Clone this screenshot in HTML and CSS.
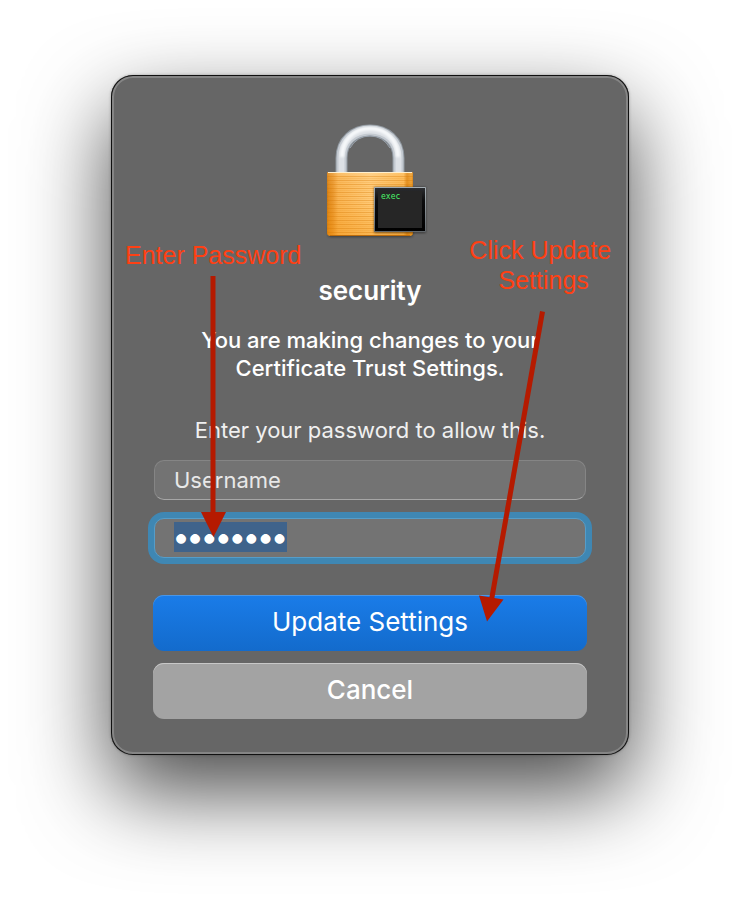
FILE: index.html
```
<!DOCTYPE html>
<html lang="en">
<head>
<meta charset="utf-8">
<title>security</title>
<link rel="stylesheet" href="styles.css">
</head>
<body>
<main class="dialog">
  <svg class="lock" viewBox="310 123 120 116" role="img" aria-label="Padlock with exec badge">
    <defs>
      <linearGradient id="body" x1="0" x2="1" y1="0" y2="0">
        <stop offset="0" stop-color="#c9750f"/>
        <stop offset=".02" stop-color="#e08a1c"/>
        <stop offset=".07" stop-color="#ea9830"/>
        <stop offset=".13" stop-color="#fab656"/>
        <stop offset=".5" stop-color="#ffcb7a"/>
        <stop offset=".89" stop-color="#fdb954"/>
        <stop offset=".93" stop-color="#e08a18"/>
        <stop offset=".98" stop-color="#efa02e"/>
        <stop offset="1" stop-color="#cf7c12"/>
      </linearGradient>
      <linearGradient id="shade" x1="0" x2="0" y1="0" y2="1">
        <stop offset="0" stop-color="#fff" stop-opacity=".12"/>
        <stop offset=".4" stop-color="#f90" stop-opacity="0"/>
        <stop offset="1" stop-color="#f08a00" stop-opacity=".35"/>
      </linearGradient>
      <linearGradient id="frame" x1="0" x2="0" y1="0" y2="1">
        <stop offset="0" stop-color="#2b2d30"/>
        <stop offset=".3" stop-color="#0c0c0d"/>
        <stop offset="1" stop-color="#000"/>
      </linearGradient>
      <linearGradient id="rim" x1="0" x2="0" y1="0" y2="1">
        <stop offset="0" stop-color="#a4adb3"/>
        <stop offset="1" stop-color="#62686c"/>
      </linearGradient>
      <pattern id="brush" width="86" height="4" patternUnits="userSpaceOnUse">
        <rect width="86" height="1" fill="#d97c08" opacity=".38"/>
        <rect y="2" width="86" height="1" fill="#e58f1c" opacity=".2"/>
      </pattern>
      <filter id="soft" x="-20%" y="-20%" width="140%" height="140%"><feGaussianBlur stdDeviation="1"/></filter>
    </defs>
    <g fill="none">
      <path d="M341.500 172V158C341.500 141 354 130.500 370 130.500S398.500 141 398.500 158V172" stroke="#8f979f" stroke-width="12"/>
      <path d="M341.500 172V158C341.500 141 354 130.500 370 130.500S398.500 141 398.500 158V172" stroke="#c3c9d0" stroke-width="10"/>
      <path d="M341.500 172V158C341.500 141 354 130.500 370 130.500S398.500 141 398.500 158V172" stroke="#dce0e5" stroke-width="6"/>
      <path d="M342 157C342 140 354 128.500 370 128.500S398 140 398 157" stroke="#f7f9fb" stroke-width="4" filter="url(#soft)"/>
      <path d="M350 148Q357 136 370 136T390 148" stroke="#99a2ac" stroke-width="1"/>
    </g>
    <rect x="328" y="225" width="85" height="12" rx="3" fill="#222" opacity=".6" filter="url(#soft)"/>
    <path d="M327 173a1 1 0 0 1 1-1h84a1 1 0 0 1 1 1v60q0 3-4 3h-78q-4 0-4-3z" fill="url(#body)"/>
    <path d="M327 173a1 1 0 0 1 1-1h84a1 1 0 0 1 1 1v60q0 3-4 3h-78q-4 0-4-3z" fill="url(#shade)"/>
    <rect x="327" y="175" width="86" height="58" fill="url(#brush)"/>
    <path d="M328 172.500h84" stroke="#fff0cf"/>
    <path d="M330 235.500h80" stroke="#bc6c0c"/>
    <rect x="374" y="187" width="52" height="46" rx="1" fill="#111" opacity=".5" filter="url(#soft)"/>
    <rect x="374" y="187" width="52" height="45" rx="1" fill="url(#rim)"/>
    <rect x="375" y="188" width="50" height="43" fill="url(#frame)"/>
    <rect x="378" y="191" width="44" height="37" fill="#262626"/>
    <text class="lock__label" x="381" y="199">exec</text>
  </svg>

  <h1 class="title">security</h1>
  <p class="message">You are making changes to your Certificate Trust Settings.</p>
  <form class="form">
    <p class="prompt">Enter your password to allow this.</p>
    <input class="field" type="text" value="Username" aria-label="Username">
    <input class="field field--password" id="password" type="password" value="password" aria-label="Password" autofocus>
    <div class="actions">
      <button class="button button--primary" type="submit">Update Settings</button>
      <button class="button" type="button">Cancel</button>
    </div>
  </form>

  <div class="notes">
    <p class="note note--password">Enter Password</p>
    <p class="note note--update">Click Update&nbsp;<br>Settings</p>
    <svg class="arrows" viewBox="111 75 518 680" aria-hidden="true">
      <path d="M213 276V515" stroke="#b51a00" stroke-width="5"/>
      <path d="M201 512h25l-12.500 25z" fill="#b51a00"/>
      <path d="M542.500 311.500 491.500 600" stroke="#b51a00" stroke-width="5"/>
      <path d="M479 595.500 503.500 599.500 487 621.500z" fill="#b51a00"/>
    </svg>
  </div>
</main>
<script src="script.js"></script>
</body>
</html>
```
FILE: styles.css
```
* { box-sizing: border-box; }

body {
  margin: 0;
  padding: 75px 24px 147px;
  background: #fff;
  color: #fff;
  font-family: Inter, "Liberation Sans", sans-serif;
  font-size: 22px;
  line-height: 28px;
}

h1, p { margin: 0; }

.dialog {
  position: relative;
  display: flex;
  flex-direction: column;
  align-items: center;
  max-width: 518px;
  margin: 0 auto;
  padding: 48px 42px 36px;
  border-radius: 22px;
  background: #666;
  text-align: center;
  box-shadow:
    inset 0 0 0 1px #111,
    inset 0 0 0 3px #858585,
    0 0 3px rgba(0, 0, 0, .3),
    0 36px 86px rgba(0, 0, 0, .72);
}

.lock { width: 120px; height: 116px; }

.lock__label {
  fill: #4bf56a;
  font-family: "DejaVu Sans Mono", monospace;
  font-size: 8px;
}

.title {
  margin-top: 37px;
  font-size: 26px;
  line-height: 30px;
  font-weight: 600;
}

.message {
  max-width: 350px;
  margin-top: 20px;
  font-weight: 500;
}

.form {
  display: flex;
  flex-direction: column;
  width: 100%;
  margin-top: 34px;
}

.prompt {
  margin-bottom: 16px;
  color: #f0f0f0;
}

.field {
  height: 40px;
  margin: 0 1px;
  padding: 0 19px;
  border: 1px solid #858585;
  border-bottom-color: #a6a6a6;
  border-radius: 10px;
  outline: 0;
  background: #737373;
  color: #e8e8e8;
  font: inherit;
}

.field--password {
  margin-top: 18px;
  padding-bottom: 2px;
  border-color: #559dc9;
  color: #fff;
  font-size: 25px;
  box-shadow: 0 0 0 6px #3f87b3;
}

.field::selection {
  background: #3f638b;
  color: #fff;
}

.field--password::selection {
  text-shadow: 1px 0 #fff, -1px 0 #fff, 0 1px #fff, 0 -1px #fff;
}

.actions {
  display: grid;
  gap: 12px;
  margin-top: 37px;
}

.button {
  height: 56px;
  padding: 0 16px 3px;
  border: 0;
  border-radius: 11px;
  background: #a3a3a3;
  box-shadow: inset 0 1px 0 #c8c8c8;
  color: #fff;
  font: inherit;
  font-size: 26px;
  font-weight: 500;
}

.button--primary {
  background: linear-gradient(#1a7ce8, #136bcc);
  box-shadow: inset 0 1px 0 #4a96e6;
  font-weight: 400;
}

.notes {
  position: absolute;
  top: 0;
  left: 50%;
  width: 518px;
  height: 680px;
  margin-left: -259px;
  pointer-events: none;
}

.note {
  position: absolute;
  color: #ff4013;
  font-family: "Liberation Sans", Arial, sans-serif;
  font-size: 25px;
  line-height: 30px;
  white-space: nowrap;
}

.note--password { top: 165px; left: 14px; }
.note--update { top: 160px; right: 11px; }

.arrows {
  display: block;
  width: 100%;
  height: 100%;
  fill: none;
}
```
FILE: script.js
```
const password = document.getElementById("password");
password.focus();
password.select();
```
